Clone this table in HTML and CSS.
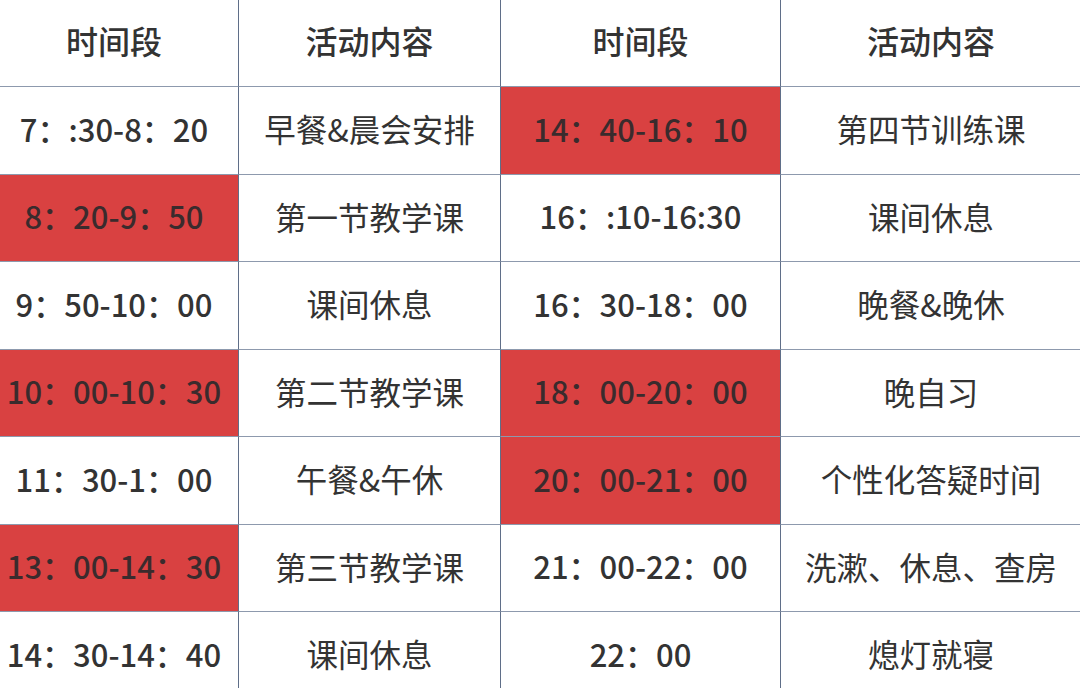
FILE: index.html
```html
<!DOCTYPE html>
<html lang="zh">
<head>
<meta charset="utf-8">
<title>作息时间表</title>
<link rel="stylesheet" href="styles.css">
</head>
<body>
<div class="table">
  <div class="cell head c1">时间段</div>
  <div class="cell head c2">活动内容</div>
  <div class="cell head c3">时间段</div>
  <div class="cell head c4">活动内容</div>

  <div class="cell time c1">7：:30-8：20</div>
  <div class="cell c2">早餐&amp;晨会安排</div>
  <div class="cell time c3 red">14：40-16：10</div>
  <div class="cell c4">第四节训练课</div>

  <div class="cell time c1 red">8：20-9：50</div>
  <div class="cell c2">第一节教学课</div>
  <div class="cell time c3">16：:10-16:30</div>
  <div class="cell c4">课间休息</div>

  <div class="cell time c1">9：50-10：00</div>
  <div class="cell c2">课间休息</div>
  <div class="cell time c3">16：30-18：00</div>
  <div class="cell c4">晚餐&amp;晚休</div>

  <div class="cell time c1 red">10：00-10：30</div>
  <div class="cell c2">第二节教学课</div>
  <div class="cell time c3 red">18：00-20：00</div>
  <div class="cell c4">晚自习</div>

  <div class="cell time c1">11：30-1：00</div>
  <div class="cell c2">午餐&amp;午休</div>
  <div class="cell time c3 red">20：00-21：00</div>
  <div class="cell c4">个性化答疑时间</div>

  <div class="cell time c1 red">13：00-14：30</div>
  <div class="cell c2">第三节教学课</div>
  <div class="cell time c3">21：00-22：00</div>
  <div class="cell c4">洗漱、休息、查房</div>

  <div class="cell time c1">14：30-14：40</div>
  <div class="cell c2">课间休息</div>
  <div class="cell time c3">22：00</div>
  <div class="cell c4">熄灯就寝</div>
</div>
</body>
</html>
```
FILE: styles.css
```css
html, body {
  margin: 0;
  padding: 0;
  background: #ffffff;
}
body {
  width: 1080px;
  height: 688px;
  overflow: hidden;
  font-family: "Noto Sans CJK SC", "Noto Sans", sans-serif;
  color: #333333;
}
.table {
  display: grid;
  margin-left: -10px;
  grid-template-columns: 249px 262px 280px 300px;
  grid-template-rows: 87px repeat(7, 87.5px);
}
.cell {
  box-sizing: border-box;
  display: flex;
  align-items: center;
  justify-content: center;
  padding-bottom: 4px;
  border-bottom: 1.5px solid #8d99ad;
  border-right: 1.5px solid #5f6e88;
  font-size: 31.5px;
  font-weight: 400;
  white-space: nowrap;
}
.c4 {
  border-right: none;
}
.head {
  font-weight: 500;
  font-size: 32px;
  padding-bottom: 6px;
}
.time {
  font-weight: 500;
  font-size: 31px;
}
.red {
  background: #d94141;
  color: #3a2b2d;
}
```
